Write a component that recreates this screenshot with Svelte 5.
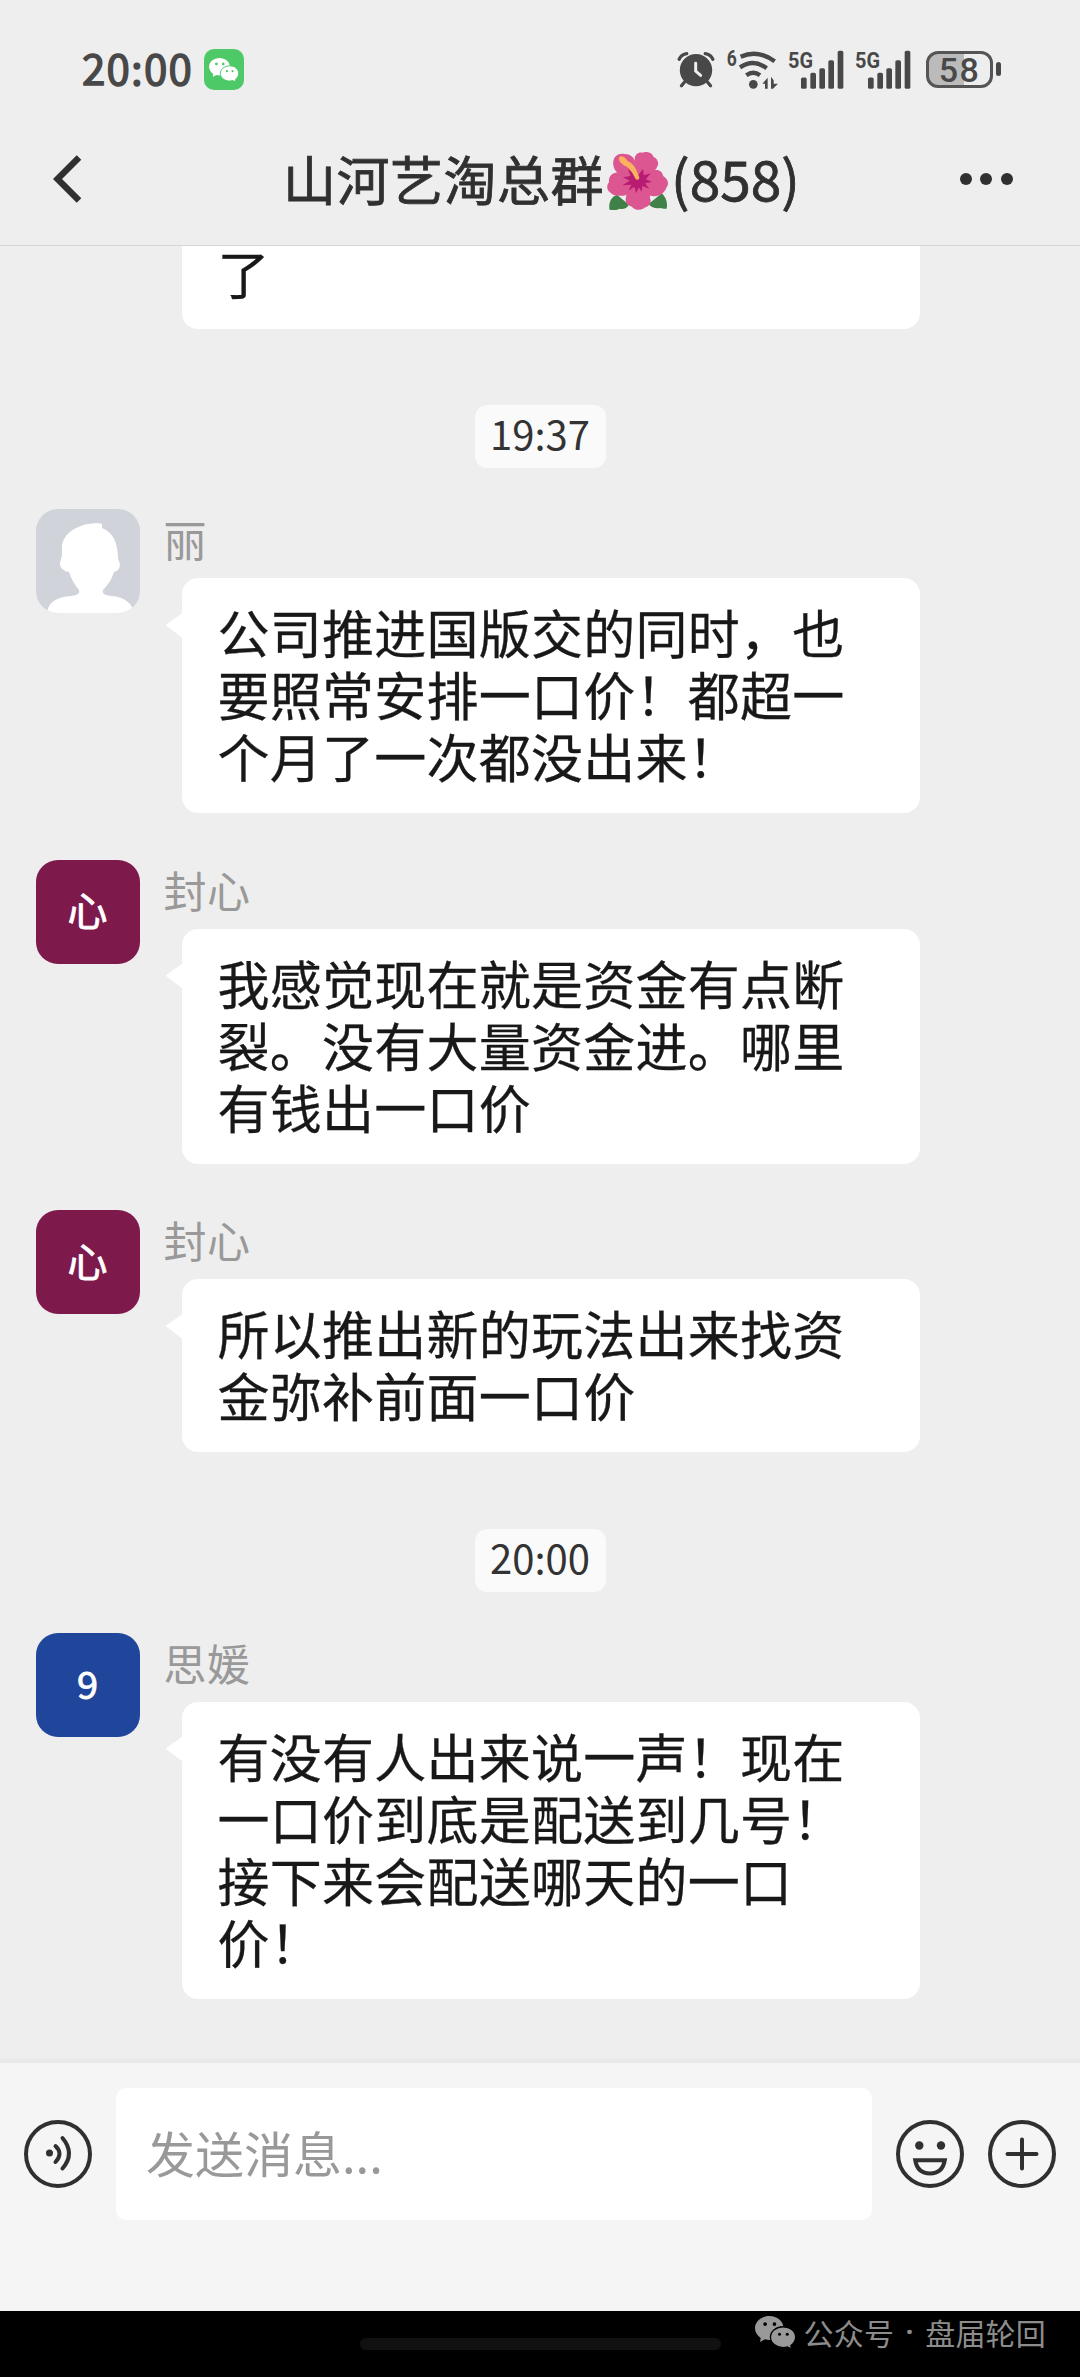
<script>
const items = [
  { type: 'tail', text: '了' },
  { type: 'time', text: '19:37' },
  {
    type: 'message',
    name: '丽',
    avatar: { kind: 'person' },
    text: '公司推进国版交的同时，也要照常安排一口价！都超一个月了一次都没出来！'
  },
  {
    type: 'message',
    name: '封心',
    avatar: { kind: 'wine', label: '心' },
    text: '我感觉现在就是资金有点断裂。没有大量资金进。哪里有钱出一口价'
  },
  {
    type: 'message',
    name: '封心',
    avatar: { kind: 'wine', label: '心' },
    text: '所以推出新的玩法出来找资金弥补前面一口价'
  },
  { type: 'time', text: '20:00' },
  {
    type: 'message',
    name: '思媛',
    avatar: { kind: 'blue', label: '9' },
    text: '有没有人出来说一声！现在一口价到底是配送到几号！接下来会配送哪天的一口价！'
  }
]
</script>

{#snippet wechat()}
  <svg class="wechat" viewBox="165 830 122 98">
    <path class="fill" d="M208 830c-24 0-43 16-43 36 0 12 7 22 17 29l-2 12 15-8c4 1 8 2 13 2 23 0 42-15 42-35s-19-36-42-36z" />
    <path class="fill edge" d="M249 862c-21 0-38 14-38 31s17 31 38 31c5 0 9-1 13-2l11 6-1-10c8-6 14-15 14-25 0-17-16-31-37-31z" />
    <g class="eyes">
      <circle cx="195" cy="854" r="5.5" />
      <circle cx="223" cy="854" r="5.5" />
      <circle cx="238" cy="884" r="4.5" />
      <circle cx="261" cy="884" r="4.5" />
    </g>
  </svg>
{/snippet}

{#snippet signal()}
  <svg class="signal" viewBox="386 58 168 116">
    <text x="386" y="113" textLength="75" lengthAdjust="spacingAndGlyphs">5G</text>
    <rect x="425" y="140" width="17" height="34" rx="5" />
    <rect x="453" y="126" width="17" height="48" rx="5" />
    <rect x="480" y="112" width="17" height="62" rx="5" />
    <rect x="507" y="88" width="17" height="86" rx="5" />
    <rect x="535" y="60" width="17" height="114" rx="5" />
  </svg>
{/snippet}

<div class="phone">
  <div class="status">
    <span class="clock">20:00</span>
    <span class="app-icon">{@render wechat()}</span>
    <div class="indicators">
      <svg class="alarm" viewBox="53 62 114 112">
        <path class="arc" d="M59 87q7-15 23-17M138 70q16 2 23 17" />
        <circle cx="110" cy="120" r="49" />
        <path class="leg" d="M76 155l-10 12M144 155l10 12" />
        <path class="hand" d="M109 99v24l15 13" />
      </svg>
      <svg class="wifi" viewBox="203 54 153 120">
        <text x="202" y="104" textLength="30" lengthAdjust="spacingAndGlyphs">6</text>
        <path class="wave" d="M244 77q52-23 102 14M242 109q41-27 80 3M261 133q21-15 41 0" />
        <circle cx="282" cy="160" r="13" />
        <path d="M309 158l16-18v33h-8v-15zM335 137v36h6l15-15h-13v-10z" />
      </svg>
      {@render signal()}
      {@render signal()}
      <div class="battery"><span>58</span></div>
    </div>
  </div>

  <header>
    <svg class="back" viewBox="0 0 30 48">
      <path d="M26 2.500L4.500 24 26 45.500" />
    </svg>
    <h1>
      <span class="group-name">山河艺淘总群</span>
      <svg class="flower" viewBox="0 0 176 174" preserveAspectRatio="none">
        <path class="leaf" d="M7 173c-2-18 2-38 22-45l34 30c-4 10-17 15-26 12-10 6-20 3-30 3zM172 170c4-18-2-34-14-46l-38 32c8 12 22 14 34 12 7 3 12 2 18 2z" />
        <path class="petal" d="M18 38C16 16 30 2 50 6c16-1 27 10 31 22l9 50-22 16C40 70 20 60 18 38z" />
        <path class="petal" d="M80 22c0-14 10-22 22-20 12-5 28-1 32 12 12 5 18 20 10 32-4 12-18 16-28 26L92 84c-6-20-18-42-12-62z" />
        <path class="petal" d="M90 82c12-18 28-30 48-28 14-2 22 6 24 18 14 8 18 24 10 34-6 18-22 30-42 26-18 0-32-14-42-30z" />
        <path class="petal" d="M82 84c-16-18-38-24-58-22C10 66 4 78 6 90c-9 12-6 26 4 32 8 10 24 10 38 9 20-4 32-20 42-38z" />
        <path class="petal" d="M88 86c-16 14-34 36-34 56-2 12 8 20 18 22 8 12 26 12 36 3 14-3 22-16 16-28 2-20-16-42-28-54z" />
        <path class="core" d="M60 50l18 16 4-14 8 18 14-20 2 20 20-6-14 18 18 8-20 4 12 16-20-8-2 18-8-14-8 18-5-20-17 12 8-18-26 2 22-14-20-10 22-4z" />
        <path class="stamen" d="M35 16c8-8 20 2 25 12 18 6 26 28 33 48 2 7-7 10-11 4C75 66 68 52 55 43 44 39 32 28 35 16z" />
      </svg>
      <span class="count">(858)</span>
    </h1>
    <div class="more"><i></i><i></i><i></i></div>
  </header>

  <main>
    {#each items as item}
      {#if item.type === 'time'}
        <div class="time">{item.text}</div>
      {:else if item.type === 'tail'}
        <div class="bubble cut">{item.text}</div>
      {:else}
        <div class="message">
          <div class="avatar {item.avatar.kind}">
            {#if item.avatar.kind === 'person'}
              <svg viewBox="0 0 104 104">
                <path d="M11 104c1-11 10-16 24-17 6-1 9-2 8-6-5-6-8-12-10-18-7-1-11-6-8-13 1-3 1-5 1-9-1-15 12-23 26-26l9-1 5 1v4c10 4 16 13 16 31 4 7 1 12-4 13-2 7-6 13-11 18-1 4 2 5 8 6 14 1 21 7 23 17z" />
              </svg>
            {:else}
              <span>{item.avatar.label}</span>
            {/if}
          </div>
          <div class="body">
            <div class="name">{item.name}</div>
            <div class="bubble arrow">{item.text}</div>
          </div>
        </div>
      {/if}
    {/each}
  </main>

  <footer>
    <svg class="tool" viewBox="0 0 68 68">
      <circle cx="34" cy="34" r="32" />
      <circle class="solid" cx="25.500" cy="33" r="3.500" />
      <path d="M31.500 26q8 7.500 0 16M38.500 18q13 15.500 0 30.500" />
    </svg>
    <div class="input">发送消息...</div>
    <svg class="tool smile" viewBox="0 0 68 68">
      <circle cx="34" cy="34" r="32" />
      <circle class="solid" cx="23.300" cy="25.500" r="4.200" />
      <circle class="solid" cx="45" cy="25.500" r="4.200" />
      <path d="M19.200 40.200h29.600c-1.500 9-7 13.300-14.800 13.300s-13.300-4.300-14.800-13.300z" />
    </svg>
    <svg class="tool" viewBox="0 0 68 68">
      <circle cx="34" cy="34" r="32" />
      <path d="M34 19.500v29M19.500 34h29" />
    </svg>
  </footer>

  <div class="nav">
    <div class="home"></div>
    <div class="watermark">
      {@render wechat()}
      <span>公众号</span>
      <span class="dot">·</span>
      <span>盘届轮回</span>
    </div>
  </div>
</div>

<style>
:global(body) {
  margin: 0;
  background: #eee;
}
.phone {
  display: flex;
  flex-direction: column;
  width: 1080px;
  height: 2377px;
  overflow: hidden;
  background: #eee;
  color: #181818;
  font-family: "Noto Sans CJK SC", sans-serif;
}
svg {
  display: block;
  flex: none;
}

/* status bar */
.status {
  display: flex;
  align-items: center;
  box-sizing: border-box;
  height: 115px;
  padding: 24px 79px 0 82px;
  color: #484848;
  fill: #484848;
}
.clock {
  width: 122px;
  padding-bottom: 6px;
  font-size: 42px;
  line-height: 60px;
  letter-spacing: 1.2px;
  -webkit-text-stroke: 1.4px #484848;
}
.app-icon {
  display: flex;
  align-items: center;
  justify-content: center;
  width: 40px;
  height: 41px;
  border-radius: 10px;
  background: #4dc968;
}
.app-icon .wechat {
  width: 30px;
  height: 24px;
}
.wechat .fill {
  fill: #fff;
}
.wechat .edge {
  stroke: #4dc968;
  stroke-width: 4;
}
.wechat .eyes {
  fill: #4dc968;
}
.indicators {
  display: flex;
  align-items: center;
  margin-left: auto;
}
.indicators svg {
  overflow: visible;
}
.indicators text {
  font-family: Roboto, sans-serif;
  font-weight: 700;
  font-size: 68px;
}
.alarm {
  width: 38px;
  height: 37px;
  margin-right: 12px;
}
.alarm path {
  fill: none;
  stroke: #484848;
  stroke-width: 10;
  stroke-linecap: round;
}
.alarm .hand {
  stroke: #eee;
  stroke-width: 9;
}
.wifi {
  width: 51px;
  height: 40px;
  margin: 0 10px 2px 0;
}
.wifi .wave {
  fill: none;
  stroke: #484848;
  stroke-width: 13;
}
.signal {
  width: 56px;
  height: 39px;
  margin-right: 11px;
}
.battery {
  position: relative;
  display: flex;
  align-items: center;
  justify-content: center;
  box-sizing: border-box;
  width: 67px;
  height: 37px;
  margin: 0 8px 0 4px;
  border: 3.500px solid #555;
  border-radius: 12px;
  background: linear-gradient(90deg, #bbb 58%, transparent 58%);
  font-family: Roboto, sans-serif;
  font-weight: 500;
  font-size: 34px;
  line-height: 34px;
  letter-spacing: 1.500px;
}
.battery::after {
  content: '';
  position: absolute;
  right: -11px;
  top: 8px;
  width: 5px;
  height: 14px;
  border-radius: 3px;
  background: #484848;
}

/* title bar */
header {
  display: flex;
  align-items: center;
  justify-content: space-between;
  box-sizing: border-box;
  height: 131px;
  padding: 0 67px 2px 53px;
  border-bottom: 1px solid #d6d6d6;
  color: #303030;
}
.back {
  width: 30px;
  height: 48px;
}
.back path {
  fill: none;
  stroke: #303030;
  stroke-width: 6.500;
}
h1 {
  display: flex;
  align-items: center;
  margin: 0 0 0 40px;
  font-weight: 400;
  font-size: 53px;
  line-height: 80px;
  -webkit-text-stroke: 0.8px #303030;
}
.group-name {
  margin-top: -2px;
  letter-spacing: 0.5px;
}
.flower {
  width: 61px;
  height: 58px;
  margin: 4px 3px 0 3px;
}
.flower .leaf {
  fill: #3f8148;
}
.flower .petal {
  fill: #dc5792;
}
.flower .core {
  fill: #b71c72;
}
.flower .stamen {
  fill: #fbb25c;
}
.count {
  margin-top: -4px;
  font-size: 55px;
}
.more {
  display: flex;
  gap: 8.500px;
}
.more i {
  width: 12px;
  height: 12px;
  border-radius: 50%;
  background: #303030;
}

/* messages */
main {
  display: flex;
  flex-direction: column;
  box-sizing: border-box;
  height: 1817px;
  overflow: hidden;
  border-bottom: 4px solid #e9e9e9;
}
.bubble {
  position: relative;
  box-sizing: border-box;
  width: 738px;
  padding: 23px 34px 26px 36px;
  border-radius: 16px;
  background: #fff;
  font-size: 52px;
  line-height: 62px;
  letter-spacing: 0.250px;
  -webkit-text-stroke: 0.3px #181818;
}
.bubble.cut {
  flex: none;
  height: 83px;
  margin: 0 0 76px 181.500px;
  padding-top: 0;
  border-radius: 0 0 16px 16px;
  line-height: 53px;
}
.bubble.arrow::before {
  content: '';
  position: absolute;
  left: -16px;
  top: 35px;
  width: 17px;
  height: 25px;
  background: #fff;
  clip-path: polygon(0 48%, 100% 0, 100% 100%);
}
.time {
  flex: none;
  align-self: center;
  box-sizing: border-box;
  width: 131px;
  height: 63px;
  margin-bottom: 41px;
  border-radius: 12px;
  background: #fafafa;
  color: #333;
  font-size: 40px;
  line-height: 57px;
  text-align: center;
}
.message {
  flex: none;
  display: flex;
  margin: 0 0 46.500px 35.500px;
}
.message:has(+ .time) {
  margin-bottom: 76.500px;
}
.avatar {
  display: flex;
  align-items: center;
  justify-content: center;
  width: 104px;
  height: 104px;
  margin-right: 24px;
  border-radius: 22px;
  overflow: hidden;
  color: #fff;
  font-size: 40px;
}
.avatar svg {
  width: 104px;
  height: 104px;
  fill: #fff;
}
.avatar span {
  padding-bottom: 5px;
  -webkit-text-stroke: 0.8px #fff;
}
.person {
  background: #d1d3da;
}
.wine {
  background: #7e1a4b;
}
.blue {
  background: #20469b;
  font-size: 38px;
}
.name {
  height: 69px;
  color: #999;
  font-size: 43px;
  line-height: 59px;
  letter-spacing: 0.4px;
}
.body .bubble {
  margin-left: 18px;
}

/* input bar */
footer {
  display: flex;
  align-items: flex-start;
  box-sizing: border-box;
  height: 248px;
  padding: 25px 24px 0;
  background: #f5f5f5;
}
.tool {
  width: 68px;
  height: 68px;
  margin-top: 32px;
  fill: none;
  stroke: #303030;
  stroke-width: 4;
  stroke-linecap: round;
}
.tool .solid {
  fill: #303030;
  stroke: none;
}
.smile {
  margin-right: 24px;
}
.input {
  flex: 1;
  height: 132px;
  margin: 0 24px;
  padding-left: 30px;
  border-radius: 10px;
  background: #fff;
  color: #999;
  font-size: 49px;
  line-height: 127px;
}

/* system navigation */
.nav {
  position: relative;
  display: flow-root;
  height: 66px;
  background: #000;
}
.home {
  width: 361px;
  height: 12px;
  margin: 27px auto 0;
  border-radius: 6px;
  background: #111;
}
.watermark {
  position: absolute;
  right: 34px;
  top: 3px;
  display: flex;
  align-items: center;
  color: #8c8c8c;
  font-size: 30px;
  line-height: 36px;
  letter-spacing: 0.200px;
}
.watermark .wechat {
  width: 41px;
  height: 33px;
  margin-right: 8px;
}
.watermark .fill {
  fill: #999;
}
.watermark .edge {
  stroke: #000;
}
.watermark .eyes {
  fill: #000;
}
.watermark .dot {
  width: 31px;
  font-family: Roboto, sans-serif;
  font-weight: 700;
  text-align: center;
}
</style>
